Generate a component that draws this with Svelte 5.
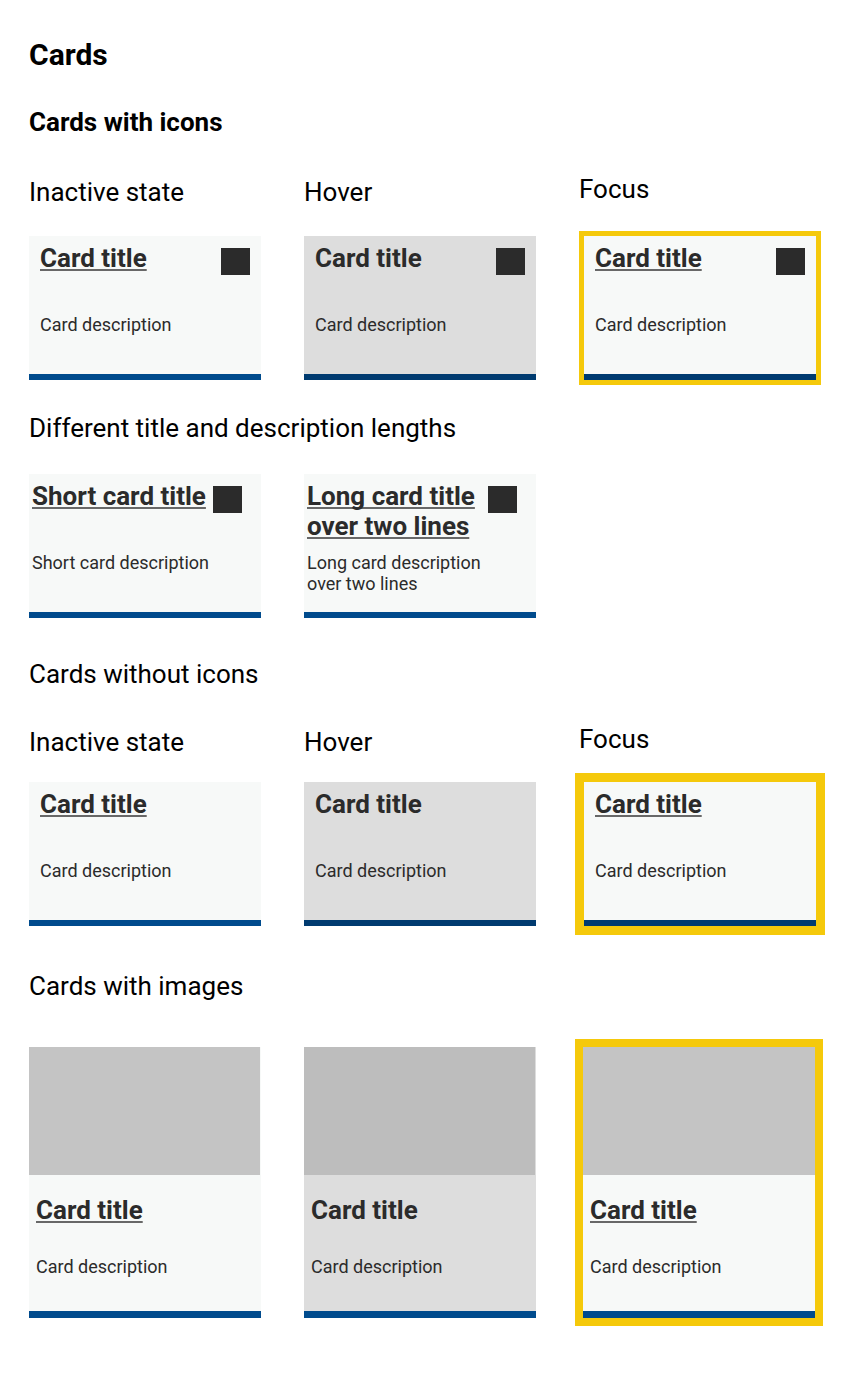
<script>
  const states = ['Inactive state', 'Hover', 'Focus'];
  const kinds = ['inactive', 'hover', 'focus'];
</script>

{#snippet card(kind, title, text, type)}
  <a href="#card" class="card {kind} {type}">
    {#if type === 'with-image'}<span class="picture"></span>{/if}
    <span class="body">
      <span class="head">
        <span class="title">{title}</span>
        {#if type.startsWith('with-icon')}
          <svg class="icon" viewBox="0 0 29 27" aria-hidden="true"><rect width="29" height="27" fill="#2b2b2b" /></svg>
        {/if}
      </span>
      <span class="text">{text}</span>
    </span>
  </a>
{/snippet}

<main>
  <h1>Cards</h1>
  <h2 class="strong">Cards with icons</h2>
  <div class="grid labels">
    {#each states as s}<h3>{s}</h3>{/each}
  </div>
  <div class="grid">
    {#each kinds as k}{@render card(k, 'Card title', 'Card description', 'with-icon')}{/each}
  </div>

  <h2 class="lengths">Different title and description lengths</h2>
  <div class="grid">
    {@render card('inactive', 'Short card title', 'Short card description', 'with-icon tight')}
    {@render card('inactive', 'Long card title over two lines', 'Long card description over two lines', 'with-icon tight')}
  </div>

  <h2 class="without">Cards without icons</h2>
  <div class="grid labels second">
    {#each states as s}<h3>{s}</h3>{/each}
  </div>
  <div class="grid">
    {#each kinds as k}{@render card(k, 'Card title', 'Card description', 'plain')}{/each}
  </div>

  <h2 class="images">Cards with images</h2>
  <div class="grid">
    {#each kinds as k}{@render card(k, 'Card title', 'Card description', 'with-image')}{/each}
  </div>
</main>

<style>
  :global(body) {
    margin: 0;
    background: #fff;
  }
  main {
    padding: 37px 45px 55px 29px;
    color: #000;
    font-family: Roboto, sans-serif;
  }
  h1, h2, h3 {
    margin: 0;
    font-size: 26px;
    line-height: 30px;
    font-weight: 400;
  }
  h1 {
    font-size: 30px;
    line-height: 36px;
    font-weight: 700;
  }
  .strong {
    margin-top: 34px;
    font-weight: 700;
  }
  .grid {
    display: grid;
    grid-template-columns: repeat(3, minmax(0, 1fr));
    column-gap: 43px;
    align-items: start;
  }
  .labels {
    margin: 37px 0 29px;
  }
  .labels h3 {
    padding-top: 3px;
  }
  .labels h3:last-child {
    padding-top: 0;
  }
  .lengths {
    margin: 33px 0 31px;
  }
  .without {
    margin-top: 41px;
  }
  .second {
    margin: 35px 0 25px;
  }
  .images {
    margin: 45px 0 46px;
  }
  .card {
    display: flex;
    flex-direction: column;
    box-sizing: border-box;
    min-height: 144px;
    border-bottom: 6px solid #004b8d;
    background: #f7f9f8;
    color: #2b2b2b;
    text-decoration: none;
  }
  .card.hover {
    background: #ddd;
  }
  .card.hover, .card.focus {
    border-bottom-color: #003b70;
  }
  .card.focus {
    margin: 0 -5px 0 5px;
    box-shadow: 0 0 0 5px #f5c90b;
  }
  .card.plain.focus {
    box-shadow: 0 0 0 9px #f5c90b;
  }
  .body {
    display: block;
    padding: 7px 11px 0;
  }
  .head {
    display: flex;
    justify-content: space-between;
    align-items: flex-start;
    min-height: 71px;
  }
  .title {
    font-size: 26px;
    line-height: 30px;
    font-weight: 700;
    text-decoration: underline;
    text-decoration-color: rgba(43, 43, 43, 0.7);
    text-decoration-thickness: 2px;
    text-decoration-skip-ink: none;
    text-underline-offset: 2px;
  }
  .hover .title {
    text-decoration: none;
  }
  .icon {
    flex: none;
    width: 29px;
    height: 27px;
    margin-top: 5px;
  }
  .text {
    display: block;
    font-size: 18px;
    line-height: 21px;
  }
  .tight .body {
    padding: 7px 19px 0 3px;
  }
  .tight .text {
    max-width: 180px;
  }
  .picture {
    display: block;
    height: 128px;
    margin-right: 1px;
    background: #c4c4c4;
  }
  .card.with-image {
    min-height: 271px;
    border-bottom: 7px solid #004b8d;
  }
  .hover .picture {
    background: #bdbdbd;
  }
  .focus .picture {
    margin-right: 0;
  }
  .card.with-image.focus {
    margin: 0 -4px 0 4px;
    box-shadow: 0 0 0 8px #f5c90b;
  }
  .with-image .body {
    padding: 20px 7px 0;
  }
  .with-image .head {
    min-height: 61px;
  }
</style>
